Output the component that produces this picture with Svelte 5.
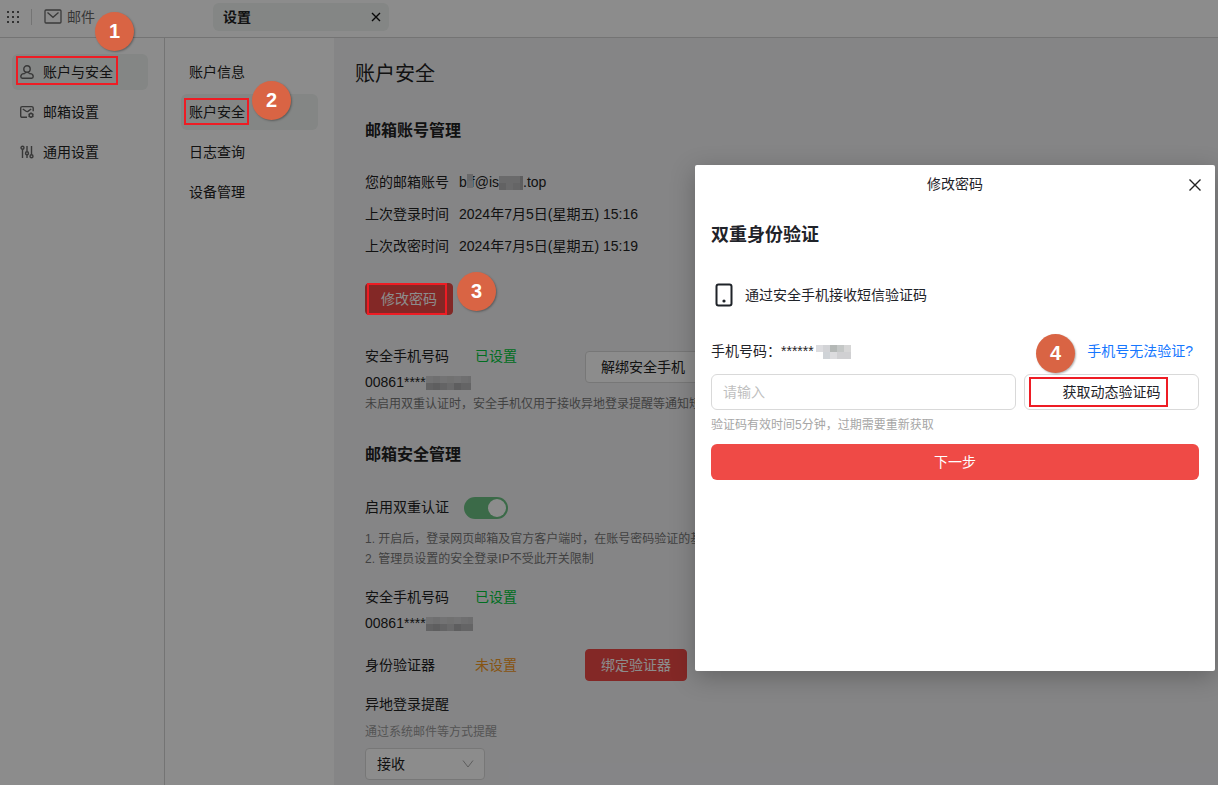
<script lang="ts">
	type Block = { x: number; y: number; w: number; h: number; fill: string };

	const sections = [
		{ icon: 'user', label: '账户与安全' },
		{ icon: 'mail', label: '邮箱设置' },
		{ icon: 'sliders', label: '通用设置' }
	];
	const pages = ['账户信息', '账户安全', '日志查询', '设备管理'];

	let section = $state('账户与安全');
	let page = $state('账户安全');
	let twoFactor = $state(true);
	let code = $state('');

	const dots = [0, 1, 2];

	function row(y: number, h: number, w: number, fills: string[]): Block[] {
		return fills.map((fill, i) => ({ x: i * w, y, w, h, fill }));
	}

	const phoneMask = [
		...row(0, 7, 7, ['#d0d0d2', '#cacacc', '#d2d2d4', '#cecece', '#d2d2d4', '#cacacc', '#c6c6c8']),
		...row(7, 7, 7, ['#b2b2b4', '#acacae', '#b6b6b8', '#c2c2c4', '#acacae', '#b6b6b8', '#b6b6b8'])
	];
	const modalMask = [
		...row(0, 7, 7, ['#dcdcdf', '#d2d3d6', '#b4b8b6', '#c4c7c6', '#d6d6d6']),
		...row(7, 7, 7, ['#fefefe', '#cfd3d7', '#dcdcde', '#d0d0d2', '#d0d0d2'])
	];
</script>

{#snippet mosaic(blocks: Block[], width: number)}
	<svg class="mosaic" {width} height="14" viewBox="0 0 {width} 14" aria-hidden="true">
		{#each blocks as b}
			<rect x={b.x} y={b.y} width={b.w} height={b.h} fill={b.fill} shape-rendering="crispEdges" />
		{/each}
	</svg>
{/snippet}

<div class="app">
	<header class="topbar">
		<svg class="dots" width="14" height="12" viewBox="0 0 14 12" fill="#5c5c5c">
			{#each dots as r}
				{#each dots as c}
					<rect x={c * 5 + 1} y={r * 5} width="2" height="2" />
				{/each}
			{/each}
		</svg>
		<span class="divider"></span>
		<a class="mail" href="#mail">
			<svg width="18" height="15" viewBox="0 0 18 15" fill="none" stroke="#6a6a6a" stroke-width="1.3">
				<rect x="1" y="1" width="16" height="13" rx="1" />
				<path d="M3.500 3.500L9 8.300l5.500-4.800" />
			</svg>
			邮件
			<span class="badge badge-1">1</span>
		</a>
		<div class="tab">
			<strong>设置</strong>
			<button class="icon-btn" aria-label="关闭标签">
				<svg width="10" height="10" viewBox="0 0 10 10" stroke="#111" stroke-width="1.4">
					<path d="M1 1l8 8M9 1l-8 8" />
				</svg>
			</button>
		</div>
	</header>

	<div class="body">
		<nav class="sidebar">
			{#each sections as s, i}
				<button class="nav-item" class:active={section === s.label} onclick={() => (section = s.label)}>
					<svg width="14" height="14" viewBox="0 0 14 14" fill="none" stroke="#666" stroke-width="1.4">
						{#if s.icon === 'user'}
							<circle cx="7" cy="4" r="3.200" />
							<path d="M4.900 8.600H4C2 8.600.8 9.900.8 11.600c0 1 .5 1.600 1.500 1.600h9.400c1 0 1.500-.6 1.500-1.600 0-1.700-1.200-3-3.200-3h-.9" />
							<path d="M5.500 7v1.600M8.500 7v1.600" />
						{:else if s.icon === 'mail'}
							<path d="M7 12.300H2.200C1.300 12.300.7 11.700.7 10.800V3C.7 2.100 1.300 1.600 2.200 1.600h9.500c.9 0 1.500.6 1.500 1.500v3.200" />
							<path d="M2.800 4l3.300 2.300c.6.4 1.200.4 1.800 0L11.200 4" />
							<circle cx="11" cy="10.300" r="1.800" />
							<path d="M11 7.500v1M11 12.100v1M8.600 8.900l.9.5M12.500 11.200l.9.500M13.400 8.900l-.9.5M9.500 11.200l-.9.500" />
						{:else}
							<path d="M2.500 4.500V13M7 1v5.500M7 10v3M11.500 1v8.500" />
							<circle cx="2.500" cy="2.800" r="1.500" />
							<circle cx="7" cy="8.200" r="1.500" />
							<circle cx="11.500" cy="11.200" r="1.500" />
						{/if}
					</svg>
					{s.label}
					{#if i === 0}<span class="frame frame-1"></span>{/if}
				</button>
			{/each}
		</nav>

		<nav class="subnav">
			{#each pages as p, i}
				<button class="nav-item" class:active={page === p} onclick={() => (page = p)}>
					{p}
					{#if i === 1}
						<span class="frame frame-2"></span>
						<span class="badge badge-2">2</span>
					{/if}
				</button>
			{/each}
		</nav>

		<main>
			<h1>账户安全</h1>

			<section>
				<h2>邮箱账号管理</h2>
				<dl class="info">
					<dt>您的邮箱账号</dt>
					<dd>
						b<span class="covered">f<svg class="mosaic" width="6" height="14" aria-hidden="true">
							<rect width="6" height="14" fill="#c0c0c2" />
							<rect y="7" width="6" height="7" fill="#c8c8ca" />
						</svg></span>@is<svg class="mosaic" width="24" height="14" aria-hidden="true">
							<rect width="24" height="14" fill="#c2c2c4" />
							<rect y="7" width="7" height="7" fill="#b2b2b4" />
							<rect x="14" y="7" width="7" height="7" fill="#b8b8ba" />
							<rect x="21" width="3" height="14" fill="#acacae" />
						</svg>.top
					</dd>
					<dt>上次登录时间</dt>
					<dd>2024年7月5日(星期五) 15:16</dd>
					<dt>上次改密时间</dt>
					<dd>2024年7月5日(星期五) 15:19</dd>
				</dl>
				<button class="btn primary change">
					修改密码
					<span class="frame frame-3"></span>
					<span class="badge badge-3">3</span>
				</button>

				<div class="setting phone">
					<span>安全手机号码</span>
					<span class="on">已设置</span>
					<button class="btn unbind">解绑安全手机</button>
					<span class="number">00861****{@render mosaic(phoneMask, 45)}</span>
					<p class="hint wide">未启用双重认证时，安全手机仅用于接收异地登录提醒等通知短信</p>
				</div>
			</section>

			<section>
				<h2 class="second">邮箱安全管理</h2>
				<div class="switch-row">
					<label for="two-factor">启用双重认证</label>
					<input id="two-factor" class="switch" type="checkbox" role="switch" bind:checked={twoFactor} />
				</div>
				<ol class="hint notes">
					<li>1. 开启后，登录网页邮箱及官方客户端时，在账号密码验证的基础上</li>
					<li>2. 管理员设置的安全登录IP不受此开关限制</li>
				</ol>
				<div class="setting">
					<span>安全手机号码</span>
					<span class="on">已设置</span>
					<span class="number">00861****{@render mosaic(phoneMask, 47)}</span>
				</div>
				<div class="setting authenticator">
					<span>身份验证器</span>
					<span class="off">未设置</span>
					<button class="btn primary">绑定验证器</button>
				</div>
				<div class="remind">
					<label for="remind">异地登录提醒</label>
					<p class="hint light">通过系统邮件等方式提醒</p>
					<div class="select">
						<select id="remind">
							<option>接收</option>
							<option>不接收</option>
						</select>
						<svg width="12" height="8" viewBox="0 0 12 8" fill="none" stroke="#aaa">
							<path d="M1 .5l5 6.500 5-6.500" />
						</svg>
					</div>
				</div>
			</section>
		</main>
	</div>

	<div class="overlay"></div>

	<div class="modal" role="dialog" aria-labelledby="modal-title">
		<header>
			<span id="modal-title">修改密码</span>
			<button class="icon-btn close" aria-label="关闭">
				<svg width="12" height="12" viewBox="0 0 12 12" stroke="#222" stroke-width="1.4">
					<path d="M.5 .5l11 11M11.500 .5l-11 11" />
				</svg>
			</button>
		</header>
		<h3>双重身份验证</h3>
		<div class="method">
			<svg width="18" height="24" viewBox="0 0 18 24" fill="none" stroke="#1f2329" stroke-width="2">
				<rect x="1.500" y="1.500" width="15" height="21" rx="2" />
				<circle cx="9" cy="18" r="1.600" fill="#1f2329" stroke="none" />
			</svg>
			通过安全手机接收短信验证码
		</div>
		<div class="phone-row">
			<label for="code">手机号码：******<span class="masked">{@render mosaic(modalMask, 35)}</span></label>
			<a href="#help">手机号无法验证?</a>
		</div>
		<div class="code-row">
			<input id="code" type="text" placeholder="请输入" bind:value={code} />
			<button class="get-code">
				获取动态验证码
				<span class="frame frame-4"></span>
				<span class="badge badge-4">4</span>
			</button>
		</div>
		<p class="expiry">验证码有效时间5分钟，过期需要重新获取</p>
		<button class="next">下一步</button>
	</div>
</div>

<style>
	:global(body) {
		margin: 0;
	}

	.app {
		position: relative;
		display: flex;
		flex-direction: column;
		min-height: 100vh;
		overflow: hidden;
		background: #fff;
		color: #222;
		font: 14px/24px 'Liberation Sans', 'Noto Sans CJK SC', sans-serif;
	}

	.app * {
		box-sizing: border-box;
	}

	button,
	input,
	select {
		margin: 0;
		font: inherit;
		color: inherit;
	}

	button {
		padding: 0;
		border: 0;
		background: none;
		cursor: pointer;
	}

	h1,
	h2,
	h3,
	p,
	dl,
	dd,
	ol {
		margin: 0;
		padding: 0;
	}

	.icon-btn {
		display: flex;
		padding: 4px;
	}

	.topbar {
		display: flex;
		align-items: center;
		height: 38px;
		padding: 0 6px 4px;
		border-bottom: 1px solid #d4d4d4;
	}

	.divider {
		width: 1px;
		height: 16px;
		margin: 0 12px 0 11px;
		background: #d4d4d4;
	}

	.mail {
		position: relative;
		display: flex;
		align-items: center;
		gap: 5px;
		width: 169px;
		color: #666;
		text-decoration: none;
	}

	.tab {
		display: flex;
		align-items: center;
		justify-content: space-between;
		width: 176px;
		height: 28px;
		padding: 0 4px 0 10px;
		border-radius: 6px;
		background: #f0f4f2;
	}

	.body {
		display: flex;
		flex: 1;
	}

	.sidebar,
	.subnav {
		display: flex;
		flex: none;
		flex-direction: column;
		gap: 4px;
		width: 165px;
		padding: 16px 16px 16px 12px;
		border-right: 1px solid #d4d4d4;
	}

	.subnav {
		width: 169px;
		padding-left: 16px;
		border-right: 0;
	}

	.nav-item {
		position: relative;
		display: flex;
		align-items: center;
		gap: 9px;
		height: 36px;
		padding: 0 8px;
		border-radius: 6px;
		text-align: left;
	}

	.nav-item.active {
		background: #f0f4f2;
	}

	main {
		flex: 1;
		min-width: 0;
		padding: 20px 20px 4px 21px;
		background: #f3f3f5;
		white-space: nowrap;
	}

	h1 {
		font-size: 20px;
		font-weight: 400;
		line-height: 32px;
	}

	section {
		padding-left: 10px;
	}

	h2 {
		margin-top: 29px;
		font-size: 16px;
	}

	h2.second {
		margin-top: 31px;
	}

	.info {
		display: grid;
		grid-template-columns: 94px auto;
		margin: 23px 0 21px;
		line-height: 32px;
	}

	.mosaic {
		vertical-align: middle;
	}

	/* the block hides all but the right edge of the letter */
	.covered {
		position: relative;
		display: inline-block;
		padding-left: 4px;
	}

	.covered .mosaic {
		position: absolute;
		top: 8px;
		left: 0;
	}

	.masked {
		padding-left: 2px;
	}

	.btn {
		height: 32px;
		padding: 0 15px;
		border: 1px solid #d9d9d9;
		border-radius: 4px;
		background: #fff;
	}

	.btn.primary {
		border-color: #ef4a46;
		background: #ef4a46;
		color: #fff;
	}

	.change {
		position: relative;
	}

	.setting {
		display: grid;
		grid-template-columns: 110px 110px auto;
		justify-content: start;
		row-gap: 2px;
	}

	.phone {
		margin-top: 29px;
	}

	.unbind {
		grid-row: 1 / span 2;
		grid-column: 3;
		justify-self: start;
		margin-top: 7px;
	}

	.number {
		grid-row: 2;
		grid-column: 1 / span 2;
	}

	.on {
		color: #00c83c;
	}

	.off {
		color: #f59a23;
	}

	.hint {
		color: #777;
		font-size: 12px;
		line-height: 16px;
	}

	.wide {
		grid-column: 1 / -1;
	}

	.light {
		color: #999;
	}

	.switch-row {
		display: flex;
		gap: 15px;
		height: 22px;
		margin-top: 30px;
		line-height: 20px;
	}

	.switch {
		width: 44px;
		height: 22px;
		padding: 2px;
		border-radius: 11px;
		background: #bbb;
		appearance: none;
	}

	.switch::before {
		content: '';
		display: block;
		width: 18px;
		height: 18px;
		border-radius: 50%;
		background: #fff;
	}

	.switch:checked {
		background: #6cc284;
	}

	.switch:checked::before {
		margin-left: auto;
	}

	.notes {
		margin: 10px 0 16px;
		line-height: 20px;
		list-style: none;
	}

	.authenticator {
		align-items: center;
		margin-top: 14px;
	}

	.remind {
		display: flex;
		flex-direction: column;
		align-items: flex-start;
		gap: 8px;
		margin-top: 11px;
	}

	.select {
		position: relative;
		width: 120px;
	}

	.select select {
		width: 100%;
		height: 32px;
		padding: 0 11px;
		border: 1px solid #d9d9d9;
		border-radius: 4px;
		background: #fff;
		appearance: none;
	}

	.select svg {
		position: absolute;
		top: 12px;
		right: 11px;
		pointer-events: none;
	}

	.overlay {
		position: absolute;
		inset: 0;
		z-index: 1;
		background: rgba(0, 0, 0, 0.45);
	}

	/* numbered walkthrough markers, drawn above the overlay */
	.frame {
		position: absolute;
		z-index: 2;
		border: 2px solid #ee1c24;
		pointer-events: none;
	}

	.badge {
		position: absolute;
		z-index: 2;
		width: 39px;
		height: 39px;
		border-radius: 50%;
		background: #d96444;
		box-shadow: 1px 1px 2px rgba(0, 0, 0, 0.3);
		color: #fff;
		font-size: 20px;
		font-weight: 700;
		line-height: 38px;
		text-align: center;
	}

	.frame-1 {
		inset: 2px 30px 5px 4px;
	}

	.frame-2 {
		inset: 4px 69px 5px 3px;
	}

	.frame-3 {
		inset: -1px 5px -1px 1px;
	}

	.frame-4 {
		inset: 2px 30px 2px 4px;
	}

	.badge-1 {
		top: 7px;
		left: 51px;
	}

	.badge-2 {
		top: -13px;
		left: 71px;
	}

	.badge-3 {
		top: -12px;
		left: 91px;
	}

	.badge-4 {
		top: -41px;
		left: 11px;
	}

	.modal {
		position: absolute;
		top: 165px;
		right: 3px;
		z-index: 3;
		width: 520px;
		max-width: 100%;
		min-height: 506px;
		padding: 0 16px 24px;
		border-radius: 2px;
		background: #fff;
		box-shadow: 0 6px 24px rgba(0, 0, 0, 0.25);
		color: #1f2329;
	}

	.modal header {
		display: flex;
		align-items: center;
		justify-content: center;
		height: 38px;
	}

	.close {
		position: absolute;
		top: 10px;
		right: 10px;
	}

	h3 {
		margin-top: 20px;
		font-size: 18px;
	}

	.method {
		display: flex;
		align-items: center;
		gap: 12px;
		margin-top: 36px;
		padding-left: 4px;
	}

	.phone-row {
		display: flex;
		justify-content: space-between;
		margin-top: 32px;
		padding-right: 6px;
	}

	.phone-row a {
		color: #1677ff;
		text-decoration: none;
	}

	.code-row {
		display: grid;
		grid-template-columns: 305px 1fr;
		gap: 8px;
		margin-top: 11px;
	}

	.code-row input,
	.get-code {
		position: relative;
		height: 36px;
		border: 1px solid #d9d9d9;
		border-radius: 6px;
		background: #fff;
	}

	.code-row input {
		min-width: 0;
		padding: 0 11px;
	}

	.code-row input::placeholder {
		color: #bfbfbf;
	}

	.expiry {
		margin: 7px 0 11px;
		color: #a6a6a6;
		font-size: 12px;
		line-height: 16px;
	}

	.next {
		width: 100%;
		height: 36px;
		border-radius: 6px;
		background: #ef4a46;
		color: #fff;
	}
</style>
